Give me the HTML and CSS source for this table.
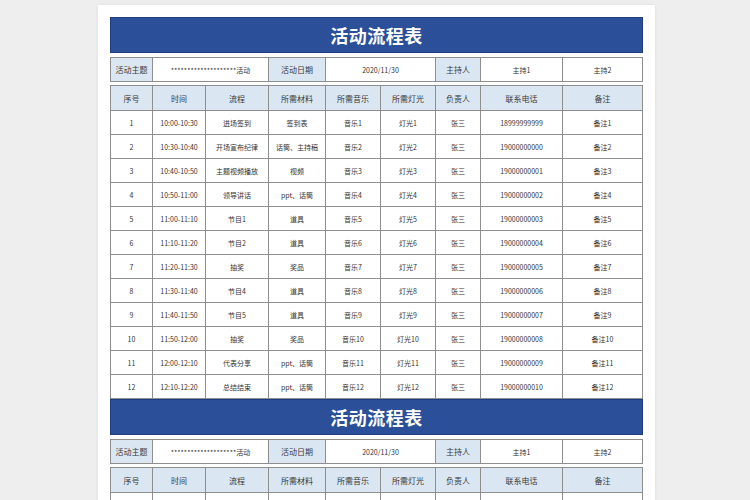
FILE: index.html
```html
<!DOCTYPE html>
<html lang="zh">
<head>
<meta charset="utf-8">
<title>活动流程表</title>
<link rel="stylesheet" href="styles.css">
</head>
<body>
<div class="paper">
  <section class="sheet">
    <div class="title">活动流程表</div>
    <div class="grid info">
      <div class="c lbl">活动主题</div>
      <div class="c span2">********************活动</div>
      <div class="c lbl">活动日期</div>
      <div class="c span2">2020/11/30</div>
      <div class="c lbl">主持人</div>
      <div class="c">主持1</div>
      <div class="c">主持2</div>
    </div>
    <div class="grid data">
      <div class="c hd">序号</div><div class="c hd">时间</div><div class="c hd">流程</div><div class="c hd">所需材料</div><div class="c hd">所需音乐</div><div class="c hd">所需灯光</div><div class="c hd">负责人</div><div class="c hd">联系电话</div><div class="c hd">备注</div>
      <div class="c">1</div><div class="c">10:00-10:30</div><div class="c">进场签到</div><div class="c">签到表</div><div class="c">音乐1</div><div class="c">灯光1</div><div class="c">张三</div><div class="c">18999999999</div><div class="c">备注1</div>
      <div class="c">2</div><div class="c">10:30-10:40</div><div class="c">开场宣布纪律</div><div class="c">话筒、主持稿</div><div class="c">音乐2</div><div class="c">灯光2</div><div class="c">张三</div><div class="c">19000000000</div><div class="c">备注2</div>
      <div class="c">3</div><div class="c">10:40-10:50</div><div class="c">主题视频播放</div><div class="c">视频</div><div class="c">音乐3</div><div class="c">灯光3</div><div class="c">张三</div><div class="c">19000000001</div><div class="c">备注3</div>
      <div class="c">4</div><div class="c">10:50-11:00</div><div class="c">领导讲话</div><div class="c">ppt、话筒</div><div class="c">音乐4</div><div class="c">灯光4</div><div class="c">张三</div><div class="c">19000000002</div><div class="c">备注4</div>
      <div class="c">5</div><div class="c">11:00-11:10</div><div class="c">节目1</div><div class="c">道具</div><div class="c">音乐5</div><div class="c">灯光5</div><div class="c">张三</div><div class="c">19000000003</div><div class="c">备注5</div>
      <div class="c">6</div><div class="c">11:10-11:20</div><div class="c">节目2</div><div class="c">道具</div><div class="c">音乐6</div><div class="c">灯光6</div><div class="c">张三</div><div class="c">19000000004</div><div class="c">备注6</div>
      <div class="c">7</div><div class="c">11:20-11:30</div><div class="c">抽奖</div><div class="c">奖品</div><div class="c">音乐7</div><div class="c">灯光7</div><div class="c">张三</div><div class="c">19000000005</div><div class="c">备注7</div>
      <div class="c">8</div><div class="c">11:30-11:40</div><div class="c">节目4</div><div class="c">道具</div><div class="c">音乐8</div><div class="c">灯光8</div><div class="c">张三</div><div class="c">19000000006</div><div class="c">备注8</div>
      <div class="c">9</div><div class="c">11:40-11:50</div><div class="c">节目5</div><div class="c">道具</div><div class="c">音乐9</div><div class="c">灯光9</div><div class="c">张三</div><div class="c">19000000007</div><div class="c">备注9</div>
      <div class="c">10</div><div class="c">11:50-12:00</div><div class="c">抽奖</div><div class="c">奖品</div><div class="c">音乐10</div><div class="c">灯光10</div><div class="c">张三</div><div class="c">19000000008</div><div class="c">备注10</div>
      <div class="c">11</div><div class="c">12:00-12:10</div><div class="c">代表分享</div><div class="c">ppt、话筒</div><div class="c">音乐11</div><div class="c">灯光11</div><div class="c">张三</div><div class="c">19000000009</div><div class="c">备注11</div>
      <div class="c">12</div><div class="c">12:10-12:20</div><div class="c">总结结束</div><div class="c">ppt、话筒</div><div class="c">音乐12</div><div class="c">灯光12</div><div class="c">张三</div><div class="c">19000000010</div><div class="c">备注12</div>
    </div>
  </section>
  <section class="sheet">
    <div class="title">活动流程表</div>
    <div class="grid info">
      <div class="c lbl">活动主题</div>
      <div class="c span2">********************活动</div>
      <div class="c lbl">活动日期</div>
      <div class="c span2">2020/11/30</div>
      <div class="c lbl">主持人</div>
      <div class="c">主持1</div>
      <div class="c">主持2</div>
    </div>
    <div class="grid data">
      <div class="c hd">序号</div><div class="c hd">时间</div><div class="c hd">流程</div><div class="c hd">所需材料</div><div class="c hd">所需音乐</div><div class="c hd">所需灯光</div><div class="c hd">负责人</div><div class="c hd">联系电话</div><div class="c hd">备注</div>
      <div class="c"></div><div class="c"></div><div class="c"></div><div class="c"></div><div class="c"></div><div class="c"></div><div class="c"></div><div class="c"></div><div class="c"></div>
    </div>
  </section>
</div>
</body>
</html>
```
FILE: styles.css
```css
html, body {
  margin: 0;
  padding: 0;
  height: 100%;
  overflow: hidden;
}
body {
  background: #eeeeee;
  font-family: "Noto Sans CJK SC", "Liberation Sans", sans-serif;
  color: #333;
}
.paper {
  width: 533px;
  margin-left: 98px;
  margin-top: 5px;
  padding: 12px 12px 0 12px;
  background: #ffffff;
  box-shadow: 0 0 3px rgba(0,0,0,0.08);
  min-height: 600px;
  display: flex;
  flex-direction: column;
}
.sheet {
  display: flex;
  flex-direction: column;
}
.title {
  height: 36px;
  background: #2b4f98;
  border: 1px solid #1f3d7e;
  box-sizing: border-box;
  color: #fff;
  font-size: 18px;
  font-weight: 700;
  display: flex;
  align-items: center;
  justify-content: center;
  letter-spacing: 0.5px;
}
.grid {
  display: grid;
  grid-template-columns: 41px 52px 62px 56px 54px 54px 44px 81px 79px;
  gap: 1px;
  background: #8e8e8e;
  border: 1px solid #8e8e8e;
}
.info {
  margin-top: 4px;
  grid-auto-rows: 23px;
}
.data {
  margin-top: 3px;
  grid-template-rows: 24px;
  grid-auto-rows: 23px;
}
.c {
  background: #ffffff;
  display: flex;
  align-items: center;
  justify-content: center;
  font-size: 7px;
  white-space: nowrap;
  overflow: hidden;
}
.span2 {
  grid-column: span 2;
}
.lbl, .hd {
  background: #dbe6f3;
  font-size: 8px;
  color: #3a3a3a;
}
```
